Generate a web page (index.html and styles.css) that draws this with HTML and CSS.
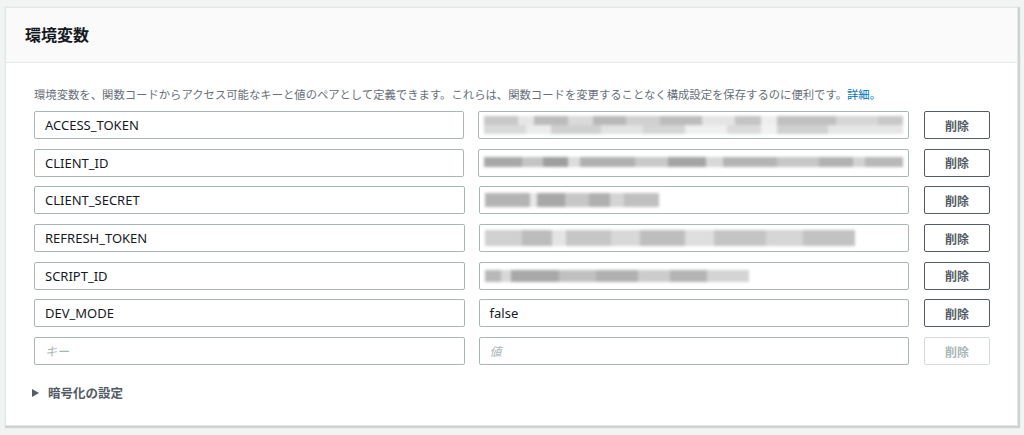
FILE: index.html
```html
<!DOCTYPE html>
<html lang="ja">
<head>
<meta charset="utf-8">
<link rel="stylesheet" href="styles.css">
</head>
<body>
<section class="card">
  <header class="card-head"><h2>環境変数</h2></header>
  <div class="card-body">
    <p class="desc">環境変数を、関数コードからアクセス可能なキーと値のペアとして定義できます。これらは、関数コードを変更することなく構成設定を保存するのに便利です。<a href="#">詳細。</a></p>
    <div class="rows">
      <div class="row">
        <div class="field">ACCESS_TOKEN</div>
        <div class="field blurwrap"><span class="blur b1"></span></div>
        <button class="del">削除</button>
      </div>
      <div class="row">
        <div class="field">CLIENT_ID</div>
        <div class="field blurwrap"><span class="blur b2"></span></div>
        <button class="del">削除</button>
      </div>
      <div class="row">
        <div class="field">CLIENT_SECRET</div>
        <div class="field blurwrap"><span class="blur b3"></span></div>
        <button class="del">削除</button>
      </div>
      <div class="row">
        <div class="field">REFRESH_TOKEN</div>
        <div class="field blurwrap"><span class="blur b4"></span></div>
        <button class="del">削除</button>
      </div>
      <div class="row">
        <div class="field">SCRIPT_ID</div>
        <div class="field blurwrap"><span class="blur b5"></span></div>
        <button class="del">削除</button>
      </div>
      <div class="row">
        <div class="field">DEV_MODE</div>
        <div class="field">false</div>
        <button class="del">削除</button>
      </div>
      <div class="row">
        <div class="field placeholder">キー</div>
        <div class="field placeholder">値</div>
        <button class="del disabled">削除</button>
      </div>
    </div>
    <div class="expander"><span class="tri"></span><span>暗号化の設定</span></div>
  </div>
</section>
</body>
</html>
```
FILE: styles.css
```css
html, body {
  margin: 0;
  padding: 0;
  background: #f2f3f3;
  font-family: "Noto Sans", "Noto Sans CJK JP", sans-serif;
  color: #16191f;
}
body {
  padding: 7px 6px 7px 5px;
}
.card {
  background: #fff;
  border: 1px solid #e3e6e6;
  box-shadow: 1px 1px 1px 1px rgba(0, 28, 36, 0.15);
  height: 419px;
  box-sizing: border-box;
}
.card-head {
  background: #fafafa;
  border-bottom: 1px solid #e7eaea;
  height: 55px;
  box-sizing: border-box;
  display: flex;
  align-items: center;
  padding-left: 19px;
}
.card-head h2 {
  margin: 0;
  font-size: 16px;
  font-weight: 700;
  color: #16191f;
  font-family: "Noto Sans CJK JP", sans-serif;
  position: relative;
  top: -1px;
}
.card-body {
  padding: 23px 27px 0 28px;
}
.desc {
  margin: 0 0 9px 0;
  font-size: 11.35px;
  color: #687078;
  line-height: 16px;
  font-family: "Noto Sans CJK JP", sans-serif;
  white-space: nowrap;
}
.desc a {
  color: #0073bb;
  text-decoration: none;
}
.rows {
  display: flex;
  flex-direction: column;
  gap: 9.7px;
}
.row {
  display: flex;
  gap: 14px;
  align-items: center;
}
.field {
  width: 431px;
  height: 28px;
  box-sizing: border-box;
  border: 1px solid #aab7b8;
  border-radius: 2px;
  padding: 0 10px;
  font-size: 13px;
  line-height: 26px;
  display: flex;
  align-items: center;
  color: #16191f;
}
.placeholder {
  color: #aab7b8;
  font-style: italic;
  font-family: "Noto Sans CJK JP", sans-serif;
  font-size: 12px;
}
.blurwrap {
  padding: 0 5px;
}
.blur {
  display: block;
  height: 18px;
  filter: blur(1.5px);
}
.b1 {
  width: 422px;
  background:
    linear-gradient(90deg, #c8c8c8 0 8%, #e6e6e6 8% 12%, #bbbbbb 12% 20%, #dadada 20% 26%, #b8b8b8 26% 34%, #d0d0d0 34% 42%, #bcbcbc 42% 52%, #e4e4e4 52% 60%, #c4c4c4 60% 66%, #eeeeee 66% 70%, #c0c0c0 70% 84%, #d6d6d6 84% 94%, #c8c8c8 94% 100%) top/100% 50% no-repeat,
    linear-gradient(90deg, #d9d9d9 0 10%, #ececec 10% 16%, #cfcfcf 16% 28%, #e2e2e2 28% 38%, #d4d4d4 38% 48%, #efefef 48% 58%, #dbdbdb 58% 66%, #f2f2f2 66% 70%, #d0d0d0 70% 82%, #e6e6e6 82% 100%) bottom/100% 50% no-repeat;
}
.b2 {
  width: 420px;
  height: 10px;
  margin-top: -1px;
  background: linear-gradient(90deg, #a8a8a8 0 9%, #c4c4c4 9% 14%, #9e9e9e 14% 20%, #dcdcdc 20% 23%, #b0b0b0 23% 36%, #c8c8c8 36% 44%, #a4a4a4 44% 53%, #d8d8d8 53% 57%, #b4b4b4 57% 70%, #c6c6c6 70% 80%, #b2b2b2 80% 88%, #d2d2d2 88% 91%, #b8b8b8 91% 100%);
}
.b3 {
  width: 174px;
  height: 14px;
  background: linear-gradient(90deg, #b4b4b4 0 26%, #e8e8e8 26% 30%, #a8a8a8 30% 46%, #c6c6c6 46% 60%, #b0b0b0 60% 72%, #d4d4d4 72% 80%, #c0c0c0 80% 100%);
}
.b4 {
  width: 370px;
  height: 16px;
  background: linear-gradient(90deg, #d0d0d0 0 10%, #bcbcbc 10% 18%, #e4e4e4 18% 22%, #c6c6c6 22% 34%, #d8d8d8 34% 42%, #bebebe 42% 54%, #dedede 54% 62%, #c4c4c4 62% 76%, #d6d6d6 76% 86%, #c2c2c2 86% 100%);
}
.b5 {
  width: 264px;
  height: 12px;
  background: linear-gradient(90deg, #b8b8b8 0 6%, #d8d8d8 6% 10%, #a8a8a8 10% 28%, #c0c0c0 28% 42%, #b0b0b0 42% 58%, #cccccc 58% 70%, #b4b4b4 70% 84%, #d4d4d4 84% 100%);
}
.del {
  width: 66px;
  height: 28px;
  margin-left: 1px;
  box-sizing: border-box;
  border: 1px solid #545b64;
  border-radius: 2px;
  background: #fff;
  font-family: "Noto Sans CJK JP", sans-serif;
  font-size: 12px;
  font-weight: 700;
  color: #545b64;
  padding: 0;
}
.del.disabled {
  border-color: #d5dbdb;
  color: #aab7b8;
}
.expander {
  margin-top: 18px;
  margin-left: -2px;
  display: flex;
  align-items: center;
  gap: 9px;
  font-family: "Noto Sans CJK JP", sans-serif;
  font-size: 12.5px;
  font-weight: 700;
  color: #545b64;
}
.tri {
  width: 0;
  height: 0;
  border-left: 7px solid #545b64;
  border-top: 4.5px solid transparent;
  border-bottom: 4.5px solid transparent;
}
```
